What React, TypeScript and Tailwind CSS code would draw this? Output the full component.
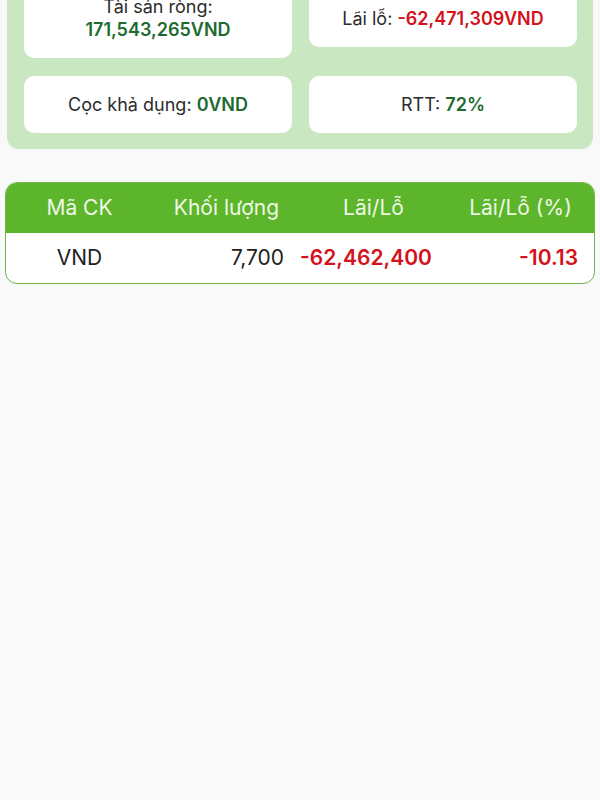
import React from "react";

const font = { fontFamily: 'Inter, "Noto Sans", "Liberation Sans", sans-serif' };

function Card({ children }: { children: React.ReactNode }) {
  return (
    <div className="flex-1 bg-white rounded-[10px] py-[17px] px-2 text-center text-[18px] leading-[23px] text-[#2b2b2b]">
      {children}
    </div>
  );
}

export default function App() {
  return (
    <div className="min-h-[800px] bg-[#f9f9f9] overflow-hidden" style={font}>
      <div className="-mt-[39px] mx-[7px] bg-[#c9e7c0] rounded-b-[12px] pt-[17px] pb-[16px] pl-[17px] pr-[16px] flex flex-col gap-[18px]">
        <div className="flex items-center gap-[17px]">
          <Card>
            <div>Tài sản ròng:</div>
            <div className="font-semibold text-[#1d6b2f]">171,543,265VND</div>
          </Card>
          <Card>
            Lãi lỗ: <span className="font-semibold text-[#d3121c]">-62,471,309VND</span>
          </Card>
        </div>
        <div className="flex items-center gap-[17px]">
          <Card>
            Cọc khả dụng: <span className="font-semibold text-[#1d6b2f]">0VND</span>
          </Card>
          <Card>
            RTT: <span className="font-semibold text-[#1d6b2f]">72%</span>
          </Card>
        </div>
      </div>

      <div className="mt-[33px] mx-[5px] rounded-[12px] border-[1.5px] border-[#72b54e] overflow-hidden bg-white">
        <div className="grid grid-cols-4 h-[50px] items-center bg-[#5db52b] text-[#eef8e6] text-[21px] leading-[26px]">
          <div className="text-center">Mã CK</div>
          <div className="text-center">Khối lượng</div>
          <div className="text-center">Lãi/Lỗ</div>
          <div className="text-center">Lãi/Lỗ (%)</div>
        </div>
        <div className="grid grid-cols-4 h-[50px] items-center text-[21px] leading-[26px] text-[#222]">
          <div className="text-center">VND</div>
          <div className="text-right pr-[16px]">7,700</div>
          <div className="text-right pr-[16px] font-semibold text-[#d3121c]">-62,462,400</div>
          <div className="text-right pr-[16px] font-semibold text-[#d3121c]">-10.13</div>
        </div>
      </div>
    </div>
  );
}
